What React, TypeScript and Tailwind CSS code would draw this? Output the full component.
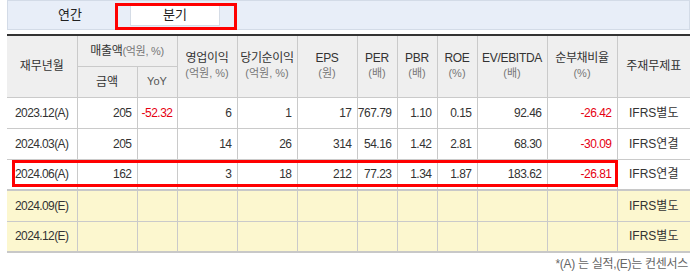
const FONT = { fontFamily: '"Liberation Sans", "Noto Sans CJK KR", sans-serif' };

type Row = {
  date: string;
  vals: (string | null)[];
  standard: string;
  estimate?: boolean;
};

const rows: Row[] = [
  { date: '2023.12(A)', vals: ['205', '-52.32', '6', '1', '17', '767.79', '1.10', '0.15', '92.46', '-26.42'], standard: 'IFRS별도' },
  { date: '2024.03(A)', vals: ['205', null, '14', '26', '314', '54.16', '1.42', '2.81', '68.30', '-30.09'], standard: 'IFRS연결' },
  { date: '2024.06(A)', vals: ['162', null, '3', '18', '212', '77.23', '1.34', '1.87', '183.62', '-26.81'], standard: 'IFRS연결' },
  { date: '2024.09(E)', vals: [null, null, null, null, null, null, null, null, null, null], standard: 'IFRS별도', estimate: true },
  { date: '2024.12(E)', vals: [null, null, null, null, null, null, null, null, null, null], standard: 'IFRS별도', estimate: true },
];

const widths = [70, 60, 40, 60, 60, 60, 40, 40, 40, 70, 70, 73];

function Head({ title, unit }: { title: string; unit: string }) {
  return (
    <th rowSpan={2} className="border-r border-[#cacaca] font-normal align-middle text-center leading-[15px]">
      <div className="text-[12px] text-[#333] tracking-[-0.3px]">{title}</div>
      <div className="text-[11px] text-[#777]">{unit}</div>
    </th>
  );
}

export default function App() {
  return (
    <div className="w-[690px] h-[277px] bg-white text-[#333] overflow-hidden" style={FONT}>
      {/* tabs */}
      <div className="relative ml-[7px] h-[30px] bg-[#e8eef8] border border-[#d3dbe7] flex items-center text-[13px] text-[#222]">
        <div className="ml-[17px] w-[90px] text-center">연간</div>
        <div className="ml-[15px] w-[90px] h-[22px] bg-white border border-[#d5dce6] flex items-center justify-center">분기</div>
        <div className="absolute left-[107px] top-[2px] w-[122px] h-[27px] border-[3px] border-[#ff0000]" />
      </div>

      {/* table */}
      <div className="relative ml-[7px] mt-[4px]">
        <table className="table-fixed border-collapse w-[683px]">
          <colgroup>
            {widths.map((w, i) => (
              <col key={i} style={{ width: w }} />
            ))}
          </colgroup>
          <thead className="bg-[#efefef]">
            <tr className="h-[31px] border-t-2 border-[#333]">
              <th rowSpan={2} className="border-r border-[#cacaca] font-normal text-[12px] text-[#333]">재무년월</th>
              <th colSpan={2} className="border-r border-b border-[#cacaca] font-normal text-[12px] text-[#333] tracking-[-0.3px]">
                매출액<span className="text-[11px] text-[#777]">(억원, %)</span>
              </th>
              <Head title="영업이익" unit="(억원, %)" />
              <Head title="당기순이익" unit="(억원, %)" />
              <Head title="EPS" unit="(원)" />
              <Head title="PER" unit="(배)" />
              <Head title="PBR" unit="(배)" />
              <Head title="ROE" unit="(%)" />
              <Head title="EV/EBITDA" unit="(배)" />
              <Head title="순부채비율" unit="(%)" />
              <th rowSpan={2} className="font-normal text-[12px] text-[#333]">주재무제표</th>
            </tr>
            <tr className="h-[31px]">
              <th className="border-r border-[#cacaca] font-normal text-[12px] text-[#333]">금액</th>
              <th className="border-r border-[#cacaca] font-normal text-[11px] text-[#555]">YoY</th>
            </tr>
          </thead>
          <tbody>
            {rows.map((r, ri) => (
              <tr
                key={r.date}
                className={[
                  'h-[31px] border-t border-[#cacaca]',
                  r.estimate ? 'bg-[#fcf7cf]' : 'bg-white',
                  ri === 3 ? 'border-t-2 border-t-[#c8c8c8]' : '',
                  ri === 4 ? 'border-b-2 border-b-[#c8c8c8]' : '',
                ].join(' ')}
              >
                <td className="border-r border-[#cacaca] pl-[8px] text-[12px] tracking-[-0.6px] text-[#333]">{r.date}</td>
                {r.vals.map((v, i) => (
                  <td
                    key={i}
                    className={
                      'border-r border-[#cacaca] pr-[5px] text-right text-[12px] tracking-[-0.5px] ' +
                      (v && v.startsWith('-') ? (i === 1 ? 'text-left pl-[4px] text-[#e60012]' : 'text-[#e60012]') : 'text-[#333]')
                    }
                  >
                    {v}
                  </td>
                ))}
                <td className="text-center text-[12px] text-[#333]">{r.standard}</td>
              </tr>
            ))}
          </tbody>
        </table>
        <div className="absolute left-[5px] top-[126px] w-[606px] h-[27px] border-[3px] border-[#ff0000]" />
      </div>

      <div className="text-right pr-[2px] pt-[2px] text-[12px] text-[#666] tracking-[-0.3px]">*(A) 는 실적,(E)는 컨센서스</div>
    </div>
  );
}
